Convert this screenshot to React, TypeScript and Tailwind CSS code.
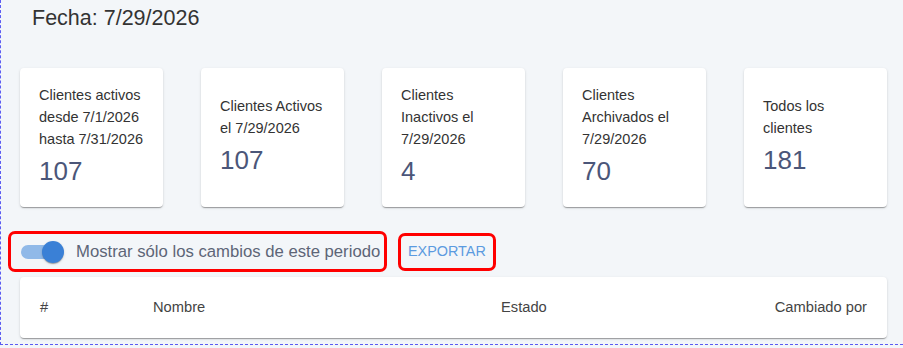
import React from "react";

const stats = [
  { label: "Clientes activos desde 7/1/2026 hasta 7/31/2026", value: 107 },
  { label: "Clientes Activos el 7/29/2026", value: 107 },
  { label: "Clientes Inactivos el 7/29/2026", value: 4 },
  { label: "Clientes Archivados el 7/29/2026", value: 70 },
  { label: "Todos los clientes", value: 181 },
];

const paper =
  "shadow-[0_2px_1px_-1px_rgba(0,0,0,0.2),0_1px_1px_0_rgba(0,0,0,0.14),0_1px_3px_0_rgba(0,0,0,0.12)]";

function StatCard({ label, value }: { label: string; value: number }) {
  return (
    <div className={`flex h-[139px] flex-col justify-center rounded bg-white pl-[19px] pr-[19px] ${paper}`}>
      <div className="text-[14.5px] leading-[22px] text-[#333]">{label}</div>
      <div className="mt-[1px] text-[26px] leading-[40px] text-[#4b5679]">{value}</div>
    </div>
  );
}

export default function App() {
  return (
    <div className="min-h-screen bg-[#f3f6f9] font-['Liberation_Sans',_Arial,_sans-serif]">
      <div className="border-b border-l border-dashed border-[#5b5bf2] pb-[6px]">
        <h1 className="pl-[31px] pt-[3px] text-[21.5px] leading-[30px] font-normal text-[#333]">
          Fecha: 7/29/2026
        </h1>

        <div className="mt-[35px] grid grid-cols-5 gap-[38px] pl-[19px] pr-[16px]">
          {stats.map((s) => (
            <StatCard key={s.label} label={s.label} value={s.value} />
          ))}
        </div>

        <div className="mt-[24px] flex items-center gap-[11px] pl-[7px]">
          <div className="flex h-[41px] w-[379px] items-center rounded-[7px] border-[3px] border-[#f00] pl-[10px]">
            <div className="relative h-[14px] w-[34px] rounded-full bg-[#90b9e8]">
              <div className={`absolute left-[21px] top-1/2 h-[22px] w-[22px] -translate-y-1/2 rounded-full bg-[#3a80d6] ${paper}`} />
            </div>
            <span className="ml-[21px] whitespace-nowrap text-[16.7px] text-[#5d6577]">
              Mostrar sólo los cambios de este periodo
            </span>
          </div>
          <div className="flex h-[38px] items-center rounded-[7px] border-[3px] border-[#f00] px-[7px]">
            <button className="text-[14.4px] uppercase text-[#5b9be0]">Exportar</button>
          </div>
        </div>

        <div className={`mt-[5px] ml-[19px] mr-[16px] rounded bg-white ${paper}`}>
          <div className="grid h-[61px] grid-cols-[113px_348px_1fr_auto] items-center px-[20px] text-[14.7px] text-[#444]">
            <div>#</div>
            <div>Nombre</div>
            <div>Estado</div>
            <div className="text-right">Cambiado por</div>
          </div>
        </div>
      </div>
    </div>
  );
}
